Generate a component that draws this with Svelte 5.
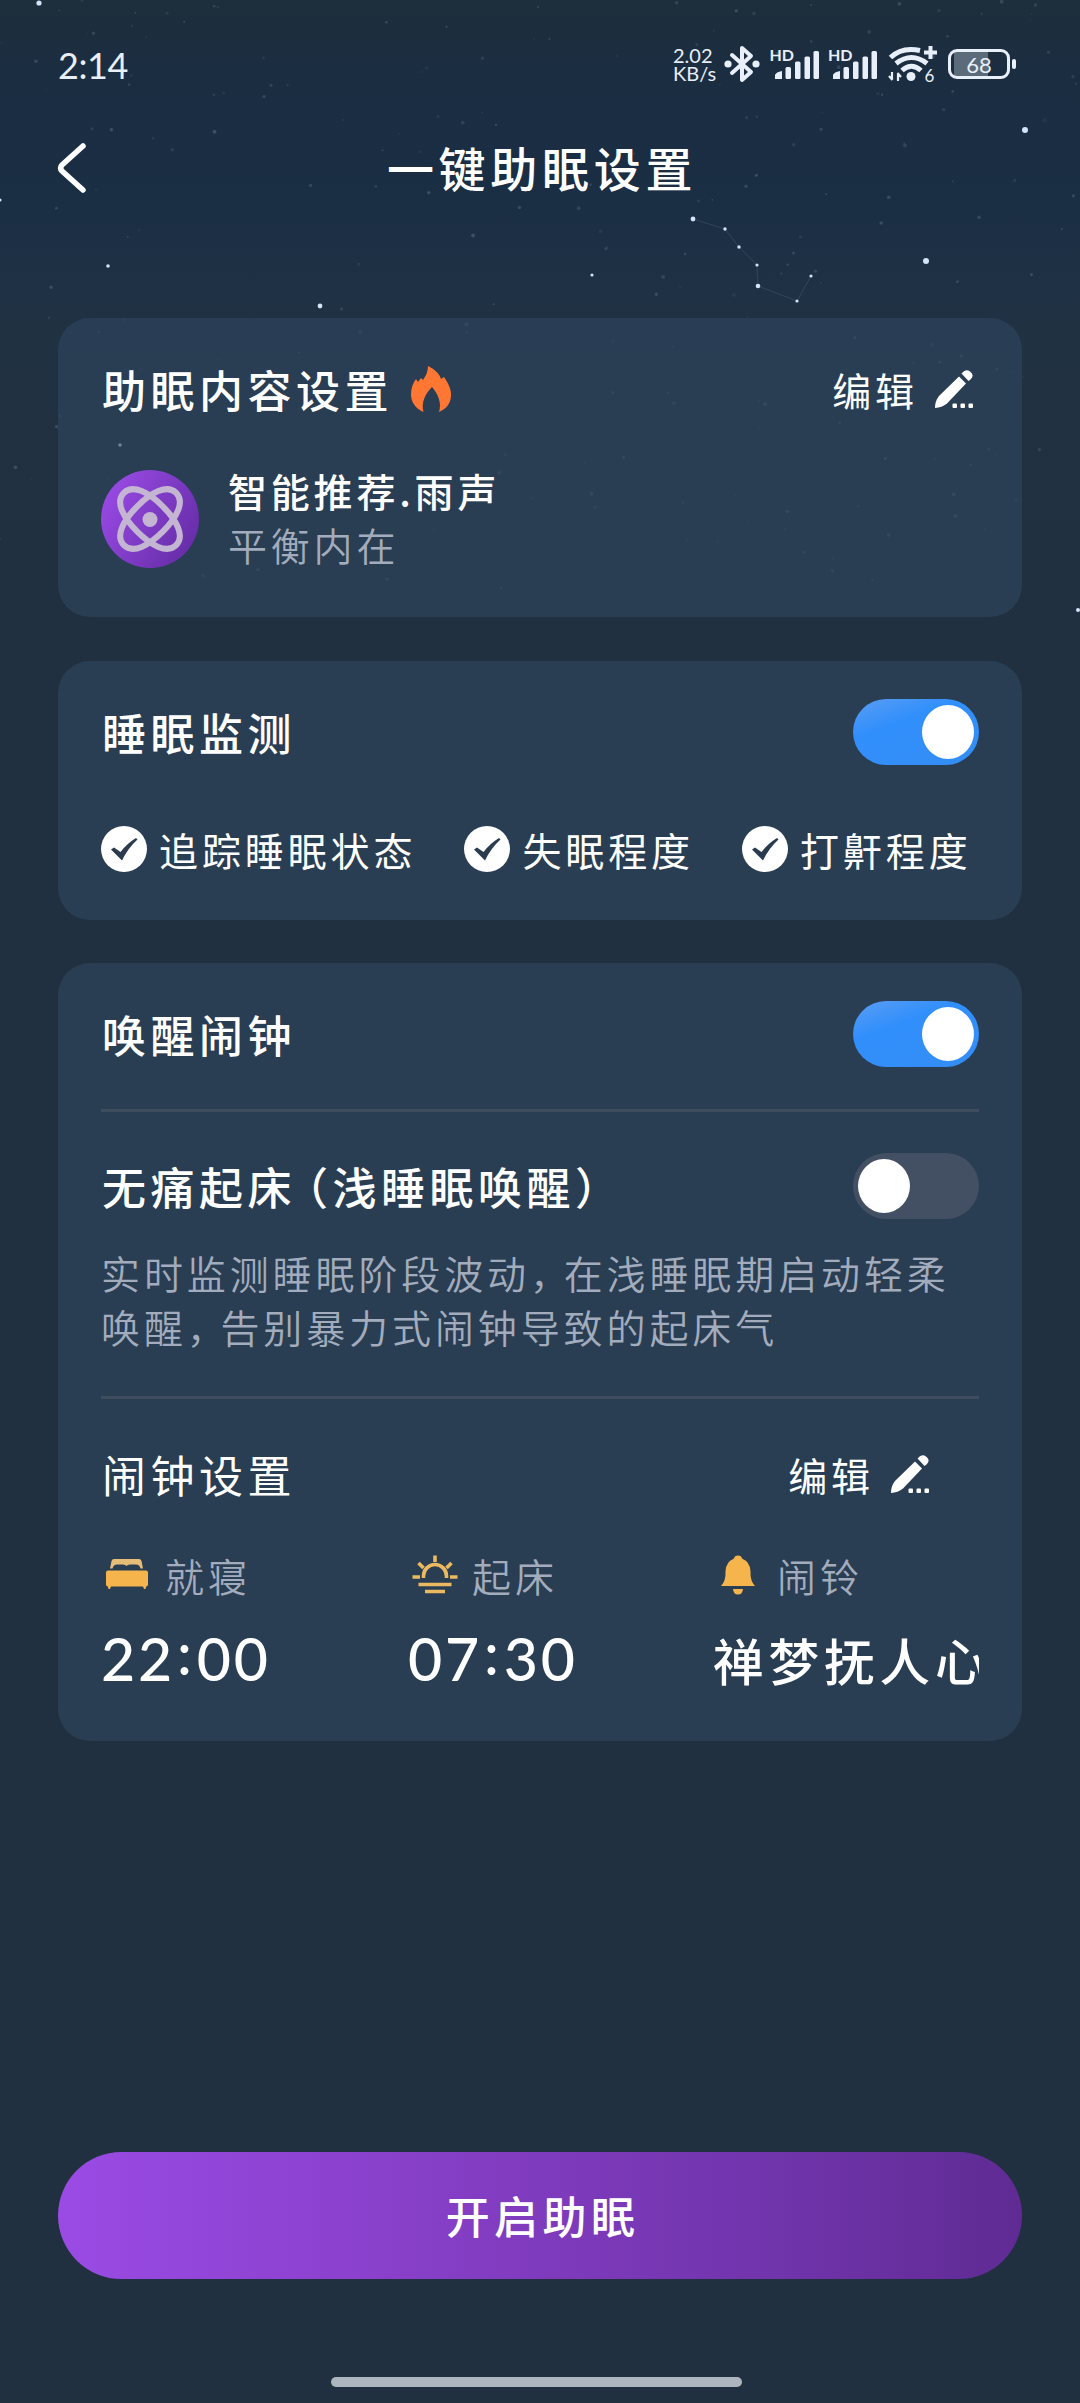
<script>
    let monitorOn = true;
    let alarmOn = true;
    let gentleOn = false;

    const checks = ["追踪睡眠状态", "失眠程度", "打鼾程度"];

    const alarmItems = [
        { icon: "bed", label: "就寝", value: "22:00" },
        { icon: "sun", label: "起床", value: "07:30" },
        { icon: "bell", label: "闹铃", value: "禅梦抚人心" }
    ];

    const brightStars = [
        [39, 3, 2.6], [108, 266, 1.8], [320, 306, 2.4], [592, 275, 1.6], [0, 200, 1.6],
        [1025, 130, 3], [926, 261, 3], [1078, 610, 2], [120, 445, 1.8]
    ];

    const constellation = [
        [693, 219, 2.4], [725, 229, 1.7], [739, 247, 1.7], [757, 265, 1.6],
        [758, 286, 2.3], [797, 301, 1.6], [811, 276, 1.6]
    ];
    const constellationLine = constellation.map((s) => s[0] + "," + s[1]).join(" ");

    // Small seeded generator so the faint stars stay in the same place
    let seed = 7;
    function random() {
        seed = (seed * 16807) % 2147483647;
        return seed / 2147483647;
    }

    const faintStars = [];
    for (let i = 0; i < 210; i++) {
        faintStars.push({
            x: random() * 1080,
            y: Math.pow(random(), 1.3) * 600,
            r: 0.8 + random() * 1.2,
            o: 0.06 + random() * 0.17
        });
    }
</script>

<div class="page">
    <svg class="stars" width="1080" height="640" viewBox="0 0 1080 640">
        {#each faintStars as s}
            <circle cx={s.x} cy={s.y} r={s.r} fill="#a9c3da" opacity={s.o} />
        {/each}
        <polyline points={constellationLine} fill="none" stroke="#7f9bb8" stroke-opacity=".2" />
        {#each [...brightStars, ...constellation] as s}
            <circle cx={s[0]} cy={s[1]} r={s[2]} fill="#d3e4fa" />
        {/each}
    </svg>

    <div class="status-bar">
        <span class="clock">2:14</span>
        <div class="status-icons">
            <div class="speed"><span>2.02</span><span>KB/s</span></div>
            <svg class="bluetooth" width="36" height="40" viewBox="0 0 36 40">
                <path d="M8 11 L27 28 L18 36 V4 L27 12 L8 29" fill="none" stroke="#e8eff9" stroke-width="4" stroke-linejoin="round" stroke-linecap="round" />
                <circle cx="4" cy="20" r="3.6" fill="#e8eff9" />
                <circle cx="32" cy="20" r="3.6" fill="#e8eff9" />
            </svg>
            {#each [1, 2] as sim}
                <div class="signal">
                    <span>HD</span>
                    <svg width="50" height="40" viewBox="0 0 50 40" fill="#e8eff9">
                        <path d="M5 35 v-4 q1-3 7-4 v8 z" />
                        <rect x="15.500" y="23" width="5.500" height="12" rx="1.500" />
                        <rect x="25" y="17.500" width="5.500" height="17.500" rx="1.500" />
                        <rect x="34.500" y="12.500" width="5.500" height="22.500" rx="1.500" />
                        <rect x="43.500" y="7" width="5.500" height="28" rx="1.500" />
                    </svg>
                </div>
            {/each}
            <div class="wifi">
                <svg width="52" height="42" viewBox="0 0 52 42">
                    <g fill="none" stroke="#e8eff9" stroke-width="5">
                        <path d="M3.500 14.500 Q15 3.500 33 7.500" />
                        <path d="M9 20.500 Q24.500 8.500 40 20.500" />
                        <path d="M15 27.500 Q24.500 19 34 27.500" />
                        <path d="M37 9.500 H50 M43.500 3 V16" stroke-width="4" />
                    </g>
                    <circle cx="24" cy="33.500" r="4.500" fill="#e8eff9" />
                    <path d="M5 29 V36 M2 33 L5.500 37 M11 38 V31 M14 34 L10.500 30" fill="none" stroke="#e8eff9" stroke-width="2.200" />
                </svg>
                <span>6</span>
            </div>
            <div class="battery"><div class="cell"><span>68</span></div><i></i></div>
        </div>
    </div>

    <header>
        <button class="back" aria-label="返回">
            <svg width="34" height="54" viewBox="0 0 34 54">
                <path d="M29 5 L8 24 Q5 27 8 30 L29 49" fill="none" stroke="#fff" stroke-width="5.500" stroke-linecap="round" />
            </svg>
        </button>
        <h1>一键助眠设置</h1>
    </header>

    <section class="card content-card">
        <div class="row">
            <h2>助眠内容设置</h2>
            <svg class="flame" width="42" height="48" viewBox="0 0 42 48">
                <path d="M18 1 C24 4 30 9 31 14 L34 12 C38 18 41.500 24 41 31 C40.500 39 36 44 29 47 C32 38 28 29 22 22 C15 29 11 38 13.500 47 C5 43 1 37 1 29 C1 23 3 18 6 14 L8 17 L11 13 L13 15 C16 11 18 6 18 1 Z" fill="#ff7733" />
            </svg>
            <button class="edit">编辑 {@render pencil()}</button>
        </div>
        <div class="sound">
            <svg width="98" height="98" viewBox="0 0 98 98">
                <defs>
                    <linearGradient id="avatar" x1="0" y1=".2" x2="1" y2=".8">
                        <stop offset="0" stop-color="#9a4be6" />
                        <stop offset="1" stop-color="#642ca5" />
                    </linearGradient>
                </defs>
                <circle cx="49" cy="49" r="49" fill="url(#avatar)" />
                <g fill="none" stroke="#c4b5d2" stroke-width="6">
                    <path transform="translate(49 49) rotate(45)" d="M-37 0 C-37 -13 -19 -18 0 -18 S37 -13 37 0 S19 18 0 18 S-37 13 -37 0 Z" />
                    <path transform="translate(49 49) rotate(-45)" d="M-37 0 C-37 -13 -19 -18 0 -18 S37 -13 37 0 S19 18 0 18 S-37 13 -37 0 Z" />
                </g>
                <circle cx="49" cy="49.500" r="7.500" fill="#c4b5d2" />
            </svg>
            <div class="sound-text">
                <strong>智能推荐.雨声</strong>
                <span>平衡内在</span>
            </div>
        </div>
    </section>

    <section class="card monitor-card">
        <div class="row">
            <h2>睡眠监测</h2>
            <button class="toggle" class:on={monitorOn} aria-label="睡眠监测" on:click={() => (monitorOn = !monitorOn)}><i></i></button>
        </div>
        <div class="checks">
            {#each checks as text}
                <div class="check">
                    <svg width="46" height="46" viewBox="0 0 46 46">
                        <circle cx="23" cy="23" r="23" fill="#fff" />
                        <path d="M10 23.500 L13 21.500 L19.500 26 Q26 17.500 35 12 L36.500 13.500 Q27 22 21 34.500 Z" fill="#2a3b4e" />
                    </svg>
                    <span>{text}</span>
                </div>
            {/each}
        </div>
    </section>

    <section class="card alarm-card">
        <div class="row">
            <h2>唤醒闹钟</h2>
            <button class="toggle" class:on={alarmOn} aria-label="唤醒闹钟" on:click={() => (alarmOn = !alarmOn)}><i></i></button>
        </div>
        <hr />
        <div class="row gentle">
            <h2>无痛起床<span class="paren">（</span>浅睡眠唤醒）</h2>
            <button class="toggle" class:on={gentleOn} aria-label="无痛起床" on:click={() => (gentleOn = !gentleOn)}><i></i></button>
        </div>
        <p>实时监测睡眠阶段波动<span class="comma">，</span>在浅睡眠期启动轻柔<br />唤醒<span class="comma">，</span>告别暴力式闹钟导致的起床气</p>
        <hr />
        <div class="row alarm-head">
            <h2>闹钟设置</h2>
            <button class="edit">编辑 {@render pencil()}</button>
        </div>
        <div class="alarm-grid">
            {#each alarmItems as item}
                <div class="alarm-item">
                    <div class="label">
                        <svg width="50" height="46" viewBox="0 0 50 46">
                            {#if item.icon === "bed"}
                                <g fill="#f6b54c">
                                    <path d="M9 16.500 L10.500 9 Q11 7 13 7 H38 Q40 7 40.500 9 L42 16.500 H39.500 Q38.500 12.500 35 12.500 H29 Q26.500 12.500 25.500 14 Q24.500 12.500 22 12.500 H16 Q12.500 12.500 11.500 16.500 Z" fill="#e6bd76" />
                                    <rect x="5" y="18.500" width="42" height="16" rx="2" />
                                    <path d="M6.500 33 h4 l-1.500 4 h-1.500 z M41.500 33 h4 l-1 4 h-1.500 z" />
                                </g>
                            {:else if item.icon === "sun"}
                                <g fill="none" stroke="#eab960" stroke-width="3.600">
                                    <path d="M15.500 26 V24 A11.500 11.500 0 0 1 38.500 24 V26" />
                                    <path d="M27 3.500 V10 M10.500 11 L15.500 16 M43.500 11 L38.500 16 M4.500 25 H12 M42 25 H49.500 M10.500 32.500 H43.500 M17 39.500 H37" />
                                </g>
                            {:else}
                                <g fill="#f6b54c">
                                    <path d="M25 3.500 Q28.500 3.500 29 6.500 Q37 10 37.500 19 Q37 29 42 34 H8 Q13 29 12.500 19 Q13 10 21 6.500 Q21.500 3.500 25 3.500 Z" />
                                    <path d="M20 37 H30 Q29.500 42.500 25 42.500 Q20.500 42.500 20 37 Z" />
                                </g>
                            {/if}
                        </svg>
                        <span>{item.label}</span>
                    </div>
                    {#if item.icon === "bell"}
                        <div class="value">{item.value}</div>
                    {:else}
                        <div class="value time">{item.value.slice(0, 2)}<span>:</span>{item.value.slice(3)}</div>
                    {/if}
                </div>
            {/each}
        </div>
    </section>

    <button class="start">开启助眠</button>
    <div class="home-bar"></div>
</div>

{#snippet pencil()}
    <svg width="40" height="40" viewBox="0 0 40 40" fill="#fff">
        <path d="M1 39 Q1 32 5 27 L25 7.500 L32 14.500 L13 34.500 Q8 38.500 1 39 Z" />
        <path d="M27.500 4.500 Q32 -1 36 2.500 Q41 6 36.500 10.500 L34.500 12 Z" />
        <rect x="18.500" y="34.500" width="4.500" height="4.500" rx="1" />
        <rect x="26.500" y="34.500" width="4.500" height="4.500" rx="1" />
        <rect x="34.500" y="34.500" width="4.500" height="4.500" rx="1" />
    </svg>
{/snippet}

<style>
    :global(body) {
        background: #213040;
    }

    .page {
        position: relative;
        box-sizing: border-box;
        width: 1080px;
        height: 2403px;
        padding: 21px 58px 16px;
        display: flex;
        flex-direction: column;
        overflow: hidden;
        color: #fff;
        font-family: "Noto Sans CJK SC", sans-serif;
        background: linear-gradient(#1d2e3c 0, #1b2d41 80px, #1a2e44 200px, #1f3144 290px, #203142 330px, #213040 560px);
    }

    .stars {
        position: absolute;
        top: 0;
        left: 0;
    }

    .status-bar, header, .card, .start, .home-bar {
        position: relative;
    }

    button {
        border: 0;
        padding: 0;
        background: none;
        color: inherit;
        font-family: inherit;
        cursor: pointer;
    }

    h1, h2, p {
        margin: 0;
    }

    svg {
        display: block;
        flex-shrink: 0;
    }

    .status-bar {
        height: 86px;
        display: flex;
        align-items: center;
        justify-content: space-between;
        color: #e8eff9;
    }

    .clock {
        margin-top: 2px;
        font-family: Lato, sans-serif;
        font-size: 36px;
        letter-spacing: -.4px;
    }

    .status-icons {
        display: flex;
        align-items: center;
        margin-right: 6px;
    }

    .speed {
        display: flex;
        flex-direction: column;
        width: 42px;
        margin-right: 9px;
        font-family: Lato, sans-serif;
        font-size: 20px;
        line-height: 18px;
    }

    .bluetooth {
        margin-right: 9.5px;
    }

    .signal {
        display: flex;
        align-items: flex-start;
        width: 50px;
        margin-right: 8.5px;
    }

    .signal span {
        width: 0;
        margin-top: 2px;
        white-space: nowrap;
        font: 700 16px/18px Lato, sans-serif;
    }

    .wifi {
        position: relative;
        margin-right: 9.5px;
    }

    .wifi span {
        position: absolute;
        left: 38px;
        top: 24px;
        font: 17px/18px Lato, sans-serif;
    }

    .battery {
        display: flex;
        align-items: center;
        gap: 2px;
    }

    .cell {
        box-sizing: border-box;
        width: 62px;
        height: 30px;
        border: 3px solid #e8eff9;
        border-radius: 9px;
        background: linear-gradient(90deg, #5c6b79 0 34px, transparent 34px) 3px 0 no-repeat;
        font: 22px/25px Lato, sans-serif;
        text-align: center;
    }

    .battery i {
        width: 4px;
        height: 10px;
        border-radius: 2px;
        background: #e8eff9;
    }

    header {
        height: 122px;
        display: flex;
        align-items: center;
        margin-bottom: 89px;
    }

    .back {
        width: 34px;
        margin-left: -4px;
    }

    h1 {
        flex: 1;
        margin-top: -2px;
        padding-right: 26px;
        font-size: 47px;
        line-height: 60px;
        font-weight: 500;
        letter-spacing: 4.7px;
        text-align: center;
    }

    h2 {
        padding-left: 1px;
        font-size: 44px;
        line-height: 60px;
        font-weight: 500;
        letter-spacing: 4.5px;
    }

    .card {
        box-sizing: border-box;
        padding: 38px 43px 0;
        border-radius: 32px;
        background: rgba(46, 69, 95, .62);
    }

    .row {
        display: flex;
        align-items: center;
        height: 66px;
    }

    .content-card {
        height: 299px;
        margin-bottom: 44px;
    }

    .flame {
        margin-left: 17px;
    }

    .edit {
        display: flex;
        align-items: center;
        gap: 16px;
        margin-left: auto;
        margin-right: 5px;
        font-size: 39px;
        line-height: 54px;
        letter-spacing: 3.9px;
    }

    .sound {
        display: flex;
        align-items: center;
        gap: 29px;
        margin-top: 43px;
    }

    .sound-text {
        display: flex;
        flex-direction: column;
        margin-top: -2px;
        margin-bottom: 2px;
        font-size: 39px;
        line-height: 54px;
        letter-spacing: 3.8px;
    }

    .sound-text strong {
        font-weight: 500;
    }

    .sound-text span, p, .label span {
        color: #a3acbc;
        font-weight: 350;
    }

    .monitor-card {
        height: 259px;
        margin-bottom: 43px;
    }

    .toggle {
        box-sizing: border-box;
        display: flex;
        width: 126px;
        height: 66px;
        margin-left: auto;
        padding: 6px 5px;
        border-radius: 33px;
        background: #434f62;
    }

    .toggle i {
        width: 52px;
        height: 54px;
        border-radius: 50%;
        background: #fff;
    }

    .toggle.on {
        justify-content: flex-end;
        background: linear-gradient(160deg, #5b9df2 0, #318ffc 35%, #348df5 100%);
    }

    .checks {
        display: flex;
        gap: 48px;
        margin-top: 61px;
    }

    .check {
        display: flex;
        align-items: center;
        gap: 12px;
        height: 46px;
        font-size: 39px;
        line-height: 44px;
        letter-spacing: 3.9px;
        white-space: nowrap;
    }

    .alarm-card {
        height: 778px;
    }

    hr {
        height: 3px;
        margin: 42px 0 0;
        border: 0;
        background: #3f4c5d;
    }

    .gentle {
        margin-top: 41px;
    }

    .paren {
        margin-left: -12px;
    }

    .comma {
        letter-spacing: -5.4px;
    }

    p {
        margin-top: 26px;
        font-size: 39px;
        line-height: 54px;
        letter-spacing: 3.9px;
        white-space: nowrap;
    }

    p + hr {
        margin-top: 43px;
    }

    .alarm-head {
        margin-top: 42px;
    }

    .alarm-head h2 {
        font-weight: 400;
    }

    .alarm-head .edit {
        margin-right: 49px;
    }

    .alarm-grid {
        display: grid;
        grid-template-columns: 307px 305px 1fr;
        margin-top: 41px;
    }

    .alarm-item {
        overflow: hidden;
    }

    .label {
        display: flex;
        align-items: center;
        gap: 14px;
        height: 54px;
        font-size: 39px;
        line-height: 54px;
        letter-spacing: 3.9px;
    }

    .value {
        height: 76px;
        margin-top: 19px;
        font-size: 50.5px;
        line-height: 76px;
        letter-spacing: 5px;
        font-weight: 500;
        white-space: nowrap;
    }

    .time {
        font-family: Lato, sans-serif;
        font-size: 59px;
        letter-spacing: 2.8px;
    }

    .time span {
        margin: 0 2px;
        vertical-align: 6px;
        line-height: 1;
    }

    .start {
        height: 127px;
        margin-top: auto;
        padding: 0 0 1px 5px;
        border-radius: 64px;
        background: linear-gradient(90deg, #9a4be4 0, #8e43d2 25%, #7f3bbd 50%, #7034ab 75%, #5f2b93 100%);
        font-size: 44px;
        font-weight: 500;
        letter-spacing: 4.4px;
    }

    .home-bar {
        width: 411px;
        height: 10px;
        margin: 98px auto 0 273px;
        border-radius: 5px;
        background: #adb5bf;
    }
</style>
